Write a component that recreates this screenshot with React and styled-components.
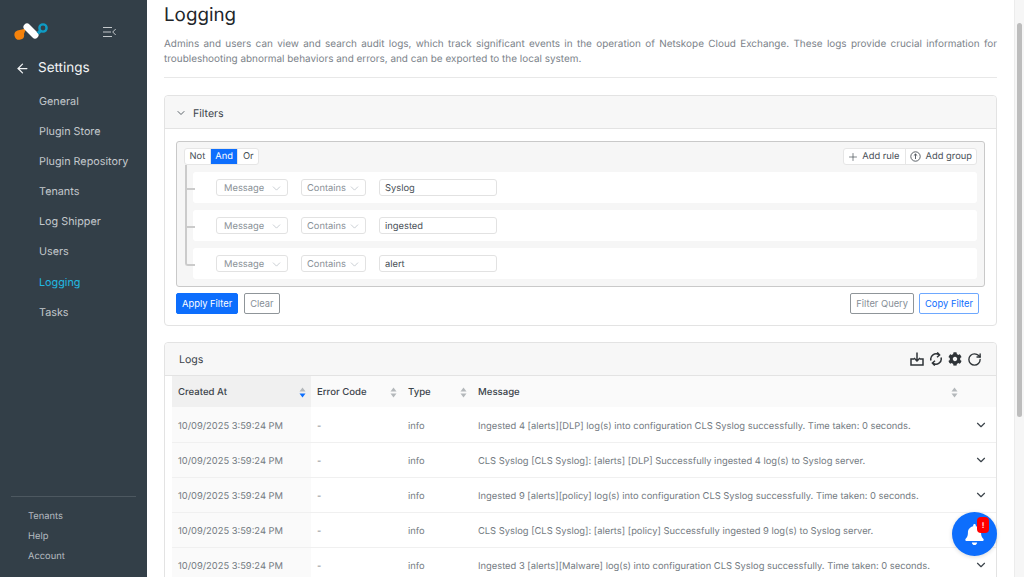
import React from 'react';
import styled, { createGlobalStyle } from 'styled-components';
import { ArrowLeft, ChevronDown, Plus, RotateCw } from 'lucide-react';
import { FaBell, FaCog } from 'react-icons/fa';

const GlobalStyle = createGlobalStyle`
  html, body, #root {
    margin: 0;
    height: 100%;
    overflow: hidden;
  }
  body {
    font-family: Inter, "Liberation Sans", sans-serif;
    color: #495057;
    text-rendering: geometricPrecision;
  }
  * {
    box-sizing: border-box;
  }
`;

const Page = styled.div`
  display: flex;
  height: 577px;
`;

const Sidebar = styled.aside`
  width: 147px;
  flex-shrink: 0;
  background: #333f48;
  display: flex;
  flex-direction: column;
`;

const Brand = styled.div`
  display: flex;
  align-items: center;
  justify-content: space-between;
  padding: 17px 31px 0 14px;
  height: 47px;
`;

const BackRow = styled.div`
  display: flex;
  align-items: center;
  gap: 8px;
  padding-left: 15px;
  margin-top: 11px;
  height: 20px;
  color: #f1f3f4;
  font-size: 13.5px;
`;

const NavList = styled.nav`
  display: flex;
  flex-direction: column;
  margin-top: 9px;
  flex: 1;
`;

const NavItem = styled.div`
  height: 30.1px;
  line-height: 30px;
  padding-left: 39px;
  font-size: 10.8px;
  color: ${props => (props.active ? '#22b8e0' : '#c3c8cc')};
`;

const FootMenu = styled.div`
  margin: 0 11px 10px;
  padding: 10px 0 0 17px;
  border-top: 1px solid #4d5860;
  display: flex;
  flex-direction: column;
`;

const FootItem = styled.div`
  height: 20px;
  line-height: 20px;
  font-size: 9.35px;
  color: #b5bbc0;
`;

const Main = styled.main`
  flex: 1;
  min-width: 0;
  height: 577px;
  overflow: hidden;
  background: #fff;
  padding: 0 17px;
`;

const ScrollTrack = styled.div`
  width: 10px;
  flex-shrink: 0;
  padding: 23px 2px 0;
  background: #f6f6f6;
  border-left: 1px solid #ececec;
`;

const ScrollThumb = styled.div`
  height: 394px;
  border-radius: 3px;
  background: #bdbdbd;
`;

const Title = styled.h1`
  margin: 3px 0 0;
  font-size: 18.8px;
  line-height: 23px;
  font-weight: 400;
  color: #212529;
`;

const Description = styled.p`
  margin: 11px 0 0;
  padding-bottom: 10px;
  font-size: 9.95px;
  line-height: 15px;
  color: #7b8289;
  text-align: justify;
  border-bottom: 1px solid #e8e8e8;
`;

const Card = styled.section`
  margin-top: ${props => props.gap}px;
  border: 1px solid #e3e3e3;
  border-radius: 4px;
  background: #fff;
`;

const CardHeader = styled.header`
  height: 33px;
  background: #f7f7f7;
  border-bottom: 1px solid #e3e3e3;
  display: flex;
  align-items: center;
  padding: 0 14px 0 10px;
  font-size: 10.6px;
  color: #3c444b;
  border-radius: 4px 4px 0 0;
`;

const FilterHeader = styled(CardHeader)`
  padding-top: 2px;
`;

const FilterTitle = styled.span`
  margin-left: 6px;
`;

const LogsTitle = styled.span`
  margin-left: 4px;
  flex: 1;
`;

const CardActions = styled.div`
  display: flex;
  align-items: center;
  gap: 5px;
  color: #2f3438;
`;

const FilterBody = styled.div`
  padding: 12px 11px 11px;
`;

const Builder = styled.div`
  height: 146px;
  background: #f6f6f6;
  border: 1px solid #c9c9c9;
  border-radius: 3px;
  padding: 6px 7px 0;
`;

const BuilderTop = styled.div`
  display: flex;
  justify-content: space-between;
`;

const Segment = styled.div`
  display: flex;
  height: 17px;
  background: #fff;
  border: 1px solid #e6e6e6;
  border-radius: 3px;
`;

const SegmentItem = styled.span`
  padding: 0 ${props => props.right || 4.5}px 0 ${props => props.left || 4.5}px;
  display: flex;
  align-items: center;
  gap: ${props => props.gap || 5}px;
  font-size: 9.35px;
  color: ${props => (props.active ? '#fff' : '#495057')};
  background: ${props => (props.active ? '#0d6efd' : 'transparent')};
  & + & {
    border-left: 1px solid #e6e6e6;
  }
`;

const Rules = styled.div`
  display: flex;
  flex-direction: column;
  gap: 7px;
  margin-top: 7px;
  padding-left: 9px;
`;

const Rule = styled.div`
  height: 31px;
  background: #fff;
  border-radius: 3px;
  display: flex;
  align-items: center;
  padding-left: 23px;
  position: relative;

  &::before {
    content: '';
    position: absolute;
    left: -8px;
    top: -22px;
    width: 8px;
    height: 38px;
    border-left: 2px solid #cbcbcb;
    border-bottom: 2px solid #cbcbcb;
    border-radius: ${props => (props.last ? '0 0 0 3px' : '0')};
  }
  &:first-child::before {
    top: -7px;
    height: 23px;
  }
`;

const SelectBox = styled.div`
  width: ${props => props.width}px;
  height: 17px;
  margin-right: 13px;
  padding: 1px 4px 0 ${props => props.left}px;
  border: 1px solid #e2e2e2;
  border-radius: 3px;
  display: flex;
  align-items: center;
  justify-content: space-between;
  font-size: 9.35px;
  color: #8a9197;
  background: #fff;
`;

const TextBox = styled.div`
  width: 118px;
  height: 17px;
  padding: 1px 0 0 5px;
  border: 1px solid #e2e2e2;
  border-radius: 3px;
  display: flex;
  align-items: center;
  font-size: 9.35px;
  color: #495057;
`;

const ButtonRow = styled.div`
  display: flex;
  gap: 5px;
  margin-top: 6px;
  padding-right: 6px;
`;

const Button = styled.button`
  height: 21px;
  padding: 0 5px;
  margin-left: ${props => props.left || 0}px;
  font-family: inherit;
  font-size: 9.35px;
  border-radius: 2px;
  background: ${props => (props.primary ? '#0d6efd' : '#fff')};
  color: ${props => (props.primary ? '#fff' : props.outline ? '#0d6efd' : '#868e96')};
  border: 1px solid ${props => (props.primary ? '#0d6efd' : props.outline ? '#6ea8fe' : '#8f9599')};
`;

const Spacer = styled.div`
  flex: 1;
`;

const TableWrap = styled.div`
  padding-left: 7px;
`;

const Table = styled.table`
  width: 100%;
  border-collapse: collapse;
  table-layout: fixed;
  font-size: 9.35px;
`;

const HeadCell = styled.th`
  height: 31px;
  padding: 2px 5px 0 6px;
  font-weight: 500;
  font-size: 9.6px;
  text-align: left;
  color: #3c444b;
  background: ${props => (props.sorted ? '#f0f0f0' : '#fafafa')};
  width: ${props => (props.width ? `${props.width}px` : 'auto')};
`;

const HeadInner = styled.div`
  display: flex;
  align-items: center;
  justify-content: space-between;
`;

const Cell = styled.td`
  height: 35px;
  padding: 4px 6px 0;
  color: #747b82;
  border-bottom: 1px solid #f0f0f0;
  background: ${props => (props.sorted ? '#fafafa' : '#fff')};
  white-space: nowrap;
`;

const ExpandCell = styled(Cell)`
  padding: 4px 8px 0 0;
  text-align: right;
  color: #3c444b;
`;

const Fab = styled.div`
  position: fixed;
  left: 952px;
  top: 512px;
  width: 45px;
  height: 44px;
  border-radius: 50%;
  background: #0d6efd;
  color: #fff;
  display: flex;
  align-items: center;
  justify-content: center;
  box-shadow: 0 1px 4px rgba(0, 0, 0, 0.15);
`;

const Badge = styled.span`
  position: absolute;
  left: 25px;
  top: 5px;
  width: 12px;
  height: 16px;
  border-radius: 4px;
  background: #f00;
  color: #ffd6d6;
  font-size: 8px;
  font-weight: 700;
  display: flex;
  align-items: center;
  justify-content: center;
`;

const Logo = () => (
  <svg width="36" height="20" viewBox="14 22 36 20">
    <path d="M26 28.5 L24 34 A4.8 4.8 0 1 1 17.5 30.5 Z" fill="#f5820b" />
    <path d="M27 27 L35 35" stroke="#fff" strokeWidth="7" strokeLinecap="round" />
    <path d="M40.5 30.5 L38 33.5" stroke="#0f9bc4" strokeWidth="3.4" />
    <circle cx="43" cy="28" r="3.6" fill="none" stroke="#0f9bc4" strokeWidth="2.4" />
  </svg>
);

const CollapseIcon = () => (
  <svg width="13" height="10" viewBox="0 0 13 10" fill="none" stroke="#c4c8cb" strokeWidth="1">
    <path d="M0 .5H9M0 5H8M0 9.5H9M12.7 2L9.7 5L12.7 8" />
  </svg>
);

const DownloadIcon = () => (
  <svg width="14" height="14" viewBox="0 0 14 14" fill="none" stroke="currentColor" strokeWidth="1.5">
    <path d="M7 .5V9M4 6L7 9L10 6M4 7H1V13H13V7H10" />
  </svg>
);

const SyncIcon = () => (
  <svg width="14" height="14" viewBox="0 0 14 14" fill="none" stroke="currentColor" strokeWidth="1.5">
    <path d="M2 8.5A5.2 5.2 0 0 1 10 2.8M8.2 .4L10.6 3L8 5.2" />
    <path d="M12 5.5A5.2 5.2 0 0 1 4 11.2M5.8 13.6L3.4 11L6 8.8" />
  </svg>
);

const PlusCircleIcon = () => (
  <svg width="11" height="11" viewBox="0 0 11 11" fill="none" stroke="#495057" strokeWidth="0.9">
    <circle cx="5.5" cy="5.5" r="4.7" />
    <path d="M5.5 3V8M3.8 4.6L5.5 3L7.2 4.6" />
  </svg>
);

const SortIcon = ({ active }) => (
  <svg width="7" height="11" viewBox="0 0 7 11">
    <path d="M3.5 0.5L6.5 4.5H0.5Z" fill="#b4b8bb" />
    <path d="M3.5 10.5L0.5 6.5H6.5Z" fill={active ? '#0d6efd' : '#b4b8bb'} />
  </svg>
);

const navItems = ['General', 'Plugin Store', 'Plugin Repository', 'Tenants', 'Log Shipper', 'Users', 'Logging', 'Tasks'];
const rules = ['Syslog', 'ingested', 'alert'];
const logs = [
  'Ingested 4 [alerts][DLP] log(s) into configuration CLS Syslog successfully. Time taken: 0 seconds.',
  'CLS Syslog [CLS Syslog]: [alerts] [DLP] Successfully ingested 4 log(s) to Syslog server.',
  'Ingested 9 [alerts][policy] log(s) into configuration CLS Syslog successfully. Time taken: 0 seconds.',
  'CLS Syslog [CLS Syslog]: [alerts] [policy] Successfully ingested 9 log(s) to Syslog server.',
  'Ingested 3 [alerts][Malware] log(s) into configuration CLS Syslog successfully. Time taken: 0 seconds.',
];

const App = () => {
  return (
    <Page>
      <GlobalStyle />
      <Sidebar>
        <Brand>
          <Logo />
          <CollapseIcon />
        </Brand>
        <BackRow>
          <ArrowLeft size={15} />
          Settings
        </BackRow>
        <NavList>
          {navItems.map(item => (
            <NavItem key={item} active={item === 'Logging'}>{item}</NavItem>
          ))}
        </NavList>
        <FootMenu>
          <FootItem>Tenants</FootItem>
          <FootItem>Help</FootItem>
          <FootItem>Account</FootItem>
        </FootMenu>
      </Sidebar>
      <Main>
        <Title>Logging</Title>
        <Description>
          Admins and users can view and search audit logs, which track significant events in the operation of Netskope
          Cloud Exchange. These logs provide crucial information for troubleshooting abnormal behaviors and errors, and
          can be exported to the local system.
        </Description>
        <Card gap={17}>
          <FilterHeader>
            <ChevronDown size={12} color="#5b636a" />
            <FilterTitle>Filters</FilterTitle>
          </FilterHeader>
          <FilterBody>
            <Builder>
              <BuilderTop>
                <Segment>
                  <SegmentItem>Not</SegmentItem>
                  <SegmentItem active>And</SegmentItem>
                  <SegmentItem>Or</SegmentItem>
                </Segment>
                <Segment>
                  <SegmentItem left={3} right={5} gap={3}><Plus size={12} strokeWidth={1.4} />Add rule</SegmentItem>
                  <SegmentItem left={4} right={4}><PlusCircleIcon />Add group</SegmentItem>
                </Segment>
              </BuilderTop>
              <Rules>
                {rules.map((value, i) => (
                  <Rule key={value} last={i === rules.length - 1}>
                    <SelectBox width={72} left={7}>
                      Message
                      <ChevronDown size={13} strokeWidth={1.2} color="#adb5bd" />
                    </SelectBox>
                    <SelectBox width={65} left={5}>
                      Contains
                      <ChevronDown size={13} strokeWidth={1.2} color="#adb5bd" />
                    </SelectBox>
                    <TextBox>{value}</TextBox>
                  </Rule>
                ))}
              </Rules>
            </Builder>
            <ButtonRow>
              <Button primary>Apply Filter</Button>
              <Button left={1}>Clear</Button>
              <Spacer />
              <Button>Filter Query</Button>
              <Button outline>Copy Filter</Button>
            </ButtonRow>
          </FilterBody>
        </Card>
        <Card gap={16}>
          <CardHeader>
            <LogsTitle>Logs</LogsTitle>
            <CardActions>
              <DownloadIcon />
              <SyncIcon />
              <FaCog size={14} />
              <RotateCw size={15} strokeWidth={2.2} />
            </CardActions>
          </CardHeader>
          <TableWrap>
            <Table>
              <thead>
                <tr>
                  <HeadCell sorted width={139}><HeadInner>Created At<SortIcon active /></HeadInner></HeadCell>
                  <HeadCell width={91}><HeadInner>Error Code<SortIcon /></HeadInner></HeadCell>
                  <HeadCell width={70}><HeadInner>Type<SortIcon /></HeadInner></HeadCell>
                  <HeadCell><HeadInner>Message<SortIcon /></HeadInner></HeadCell>
                  <HeadCell width={33} />
                </tr>
              </thead>
              <tbody>
                {logs.map((message, i) => (
                  <tr key={i}>
                    <Cell sorted>10/09/2025 3:59:24 PM</Cell>
                    <Cell>-</Cell>
                    <Cell>info</Cell>
                    <Cell>{message}</Cell>
                    <ExpandCell><ChevronDown size={14} /></ExpandCell>
                  </tr>
                ))}
              </tbody>
            </Table>
          </TableWrap>
        </Card>
      </Main>
      <ScrollTrack>
        <ScrollThumb />
      </ScrollTrack>
      <Fab>
        <FaBell size={21} />
        <Badge>!</Badge>
      </Fab>
    </Page>
  );
};

export default App;
